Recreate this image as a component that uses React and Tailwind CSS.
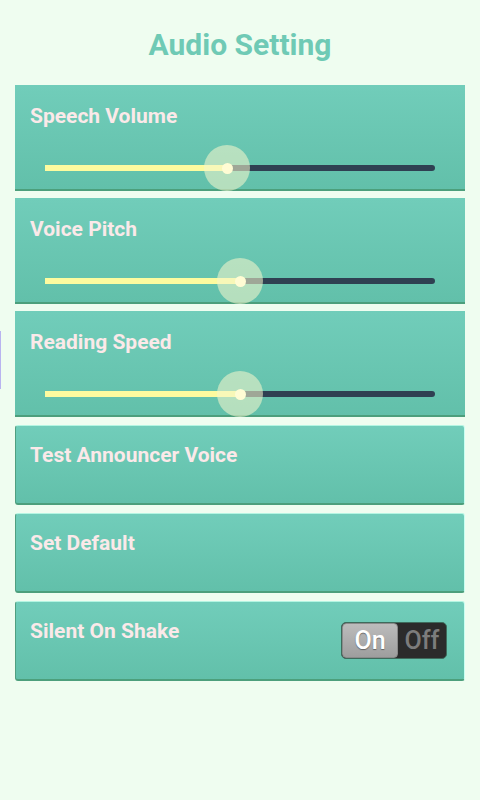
import React from 'react';

const sliders = [
  { label: 'Speech Volume', pos: 182 },
  { label: 'Voice Pitch', pos: 195 },
  { label: 'Reading Speed', pos: 195 },
];

const buttons = ['Test Announcer Voice', 'Set Default'];

const SliderCard = ({ label, pos }) => (
  <div className="h-[106px] bg-gradient-to-b from-[#71cdba] to-[#62c0aa] border-b-2 border-[#4c9f7c] pt-[19px] pl-[15px]">
    <div className="text-[21px] leading-[24px] font-bold text-[#fbe9e9]">{label}</div>
    <div className="relative mt-[17px] ml-[15px] w-[390px] h-[46px]">
      <div className="absolute left-0 right-0 top-[20px] h-[6px] rounded-r-full bg-[#2f4052]" />
      <div className="absolute left-0 top-[20px] h-[6px] bg-[#fdfb9f]" style={{ width: pos }} />
      <div
        className="absolute top-0 w-[46px] h-[46px] rounded-full bg-[rgba(244,247,204,0.57)]"
        style={{ left: pos - 23 }}
      />
      <div
        className="absolute top-[17.5px] w-[11px] h-[11px] rounded-full bg-[#fffcd4]"
        style={{ left: pos - 5.5 }}
      />
    </div>
  </div>
);

const ButtonCard = ({ label, children }) => (
  <div className="h-[80px] rounded-[3px] bg-gradient-to-b from-[#71cdba] to-[#62c0aa] border border-t-[#b4f5e2] border-r-[#c8fff2] border-b-[#4c9f7c] border-l-[#4f9f80] border-b-2 pt-[17px] pl-[14px] pr-[17px] flex justify-between items-start">
    <div className="text-[21px] leading-[24px] font-bold text-[#fbe9e9]">{label}</div>
    {children}
  </div>
);

const Toggle = () => (
  <div className="mt-[3px] flex w-[106px] h-[37px] rounded-[5px] bg-[#2b2b2b] border border-[#3e6b5c]">
    <div className="w-[56px] h-full rounded-[4px] bg-gradient-to-b from-[#bcbcbc] to-[#9e9e9e] border border-[#8a8a8a] flex items-center justify-center text-[25px] font-medium text-white [text-shadow:0_1px_1px_rgba(0,0,0,0.4)]">
      On
    </div>
    <div className="flex-1 flex items-center justify-center text-[25px] font-medium text-[#7c7c7c]">
      Off
    </div>
  </div>
);

export default function App() {
  return (
    <div className="relative min-h-[800px] bg-[#effdf0] font-['Roboto','Liberation_Sans',sans-serif]">
      <div className="absolute left-0 top-[331px] w-[1px] h-[58px] bg-[#b9b4f0]" />
      <div className="h-[85px] flex items-center justify-center pt-[5px]">
        <h1 className="text-[30px] leading-[36px] font-bold text-[#6fcab5]">Audio Setting</h1>
      </div>
      <div className="px-[15px] flex flex-col gap-[7px]">
        {sliders.map((s) => (
          <SliderCard key={s.label} {...s} />
        ))}
      </div>
      <div className="px-[15px] mt-[8px] flex flex-col gap-[8px]">
        {buttons.map((b) => (
          <ButtonCard key={b} label={b} />
        ))}
        <ButtonCard label="Silent On Shake">
          <Toggle />
        </ButtonCard>
      </div>
    </div>
  );
}
